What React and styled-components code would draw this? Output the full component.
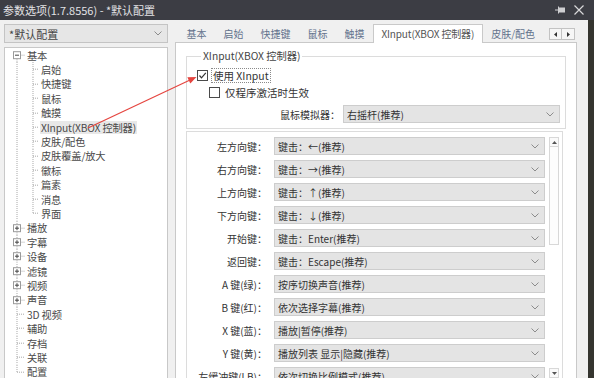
import React from "react";
import styled, { createGlobalStyle } from "styled-components";

const Global = createGlobalStyle`
  html, body { margin: 0; padding: 0; background: #f0f0f0; }
  body { font-family: "Noto Sans CJK SC", "Noto Sans", sans-serif; }
  * { box-sizing: border-box; }
`;

const Window = styled.div`
  position: relative;
  width: 594px;
  height: 378px;
  overflow: hidden;
  display: flex;
  flex-direction: column;
  background: #f0f0f0;
  font-family: "Noto Sans CJK SC", "Noto Sans", sans-serif;
`;

const TitleBar = styled.div`
  height: 20px;
  flex: none;
  background: #3c3d44;
  display: flex;
  align-items: center;
  padding-left: 3px;
  color: #e2e2e4;
  font-size: 11px;
`;

const Title = styled.div`
  flex: 1;
  white-space: nowrap;
  line-height: 20px;
`;

const TitleButtons = styled.div`
  display: flex;
  align-items: center;
  gap: 9px;
  margin-right: 10px;
`;

const Body = styled.div`
  flex: 1;
  min-height: 0;
  display: flex;
`;

const LeftColumn = styled.div`
  width: 164px;
  margin-left: 4px;
  padding-top: 4px;
  display: flex;
  flex-direction: column;
  gap: 4px;
  flex: none;
`;

const ProfileCombo = styled.div`
  height: 19px;
  flex: none;
  background: #e6e6e6;
  border: 1px solid #c4c4c4;
  display: flex;
  align-items: center;
  padding: 0 5px 0 4px;
  font-size: 11px;
  color: #444;
`;

const ComboText = styled.span`
  flex: 1;
  white-space: nowrap;
  overflow: hidden;
`;

const Tree = styled.div`
  flex: 1;
  min-height: 0;
  background: #fff;
  border: 1px solid #c8c8c8;
  border-bottom: none;
  overflow: hidden;
`;

const TreeRow = styled.div`
  height: 14.4px;
  display: flex;
  align-items: center;
  font-size: 10.25px;
  color: #4a4a4a;
  white-space: nowrap;
`;

const TreeLabel = styled.span`
  padding: 0 1px;
  line-height: 13px;
  letter-spacing: -0.15px;
  background: ${(p) => (p.$selected ? "#e8e8e8" : "transparent")};
`;

const RightColumn = styled.div`
  width: 402px;
  margin-left: 7px;
  flex: none;
  display: flex;
  flex-direction: column;
`;

const Gutter = styled.div`
  width: 11px;
  flex: none;
  background: #f0f0f0;
`;

const EdgeStrip = styled.div`
  flex: 1;
  background: #35352f;
`;

const TabStrip = styled.div`
  height: 22px;
  flex: none;
  display: flex;
  align-items: flex-start;
  padding: 4px 0 0 3px;
`;

const Tab = styled.div`
  flex: none;
  height: ${(p) => (p.$active ? "19px" : "18px")};
  line-height: 17px;
  padding: 0 7.5px;
  font-size: 10px;
  letter-spacing: ${(p) => (p.$active ? "-0.15px" : "0")};
  white-space: nowrap;
  color: ${(p) => (p.$active ? "#555" : "#62728c")};
  background: ${(p) => (p.$active ? "#fff" : "transparent")};
  border: ${(p) => (p.$active ? "1px solid #c9c9c9" : "1px solid transparent")};
  border-bottom: none;
  position: relative;
  z-index: 1;
`;

const TabScroll = styled.div`
  margin-left: auto;
  margin-top: 4px;
  margin-right: 2px;
  display: flex;
`;

const TabScrollBtn = styled.div`
  width: 13px;
  height: 12px;
  background: #f6f6f6;
  border: 1px solid #c3c3c3;
  border-left: ${(p) => (p.$second ? "none" : "1px solid #c3c3c3")};
  display: flex;
  align-items: center;
  justify-content: center;
`;

const Panel = styled.div`
  flex: 1;
  min-height: 0;
  background: #fff;
  border: 1px solid #c9c9c9;
  border-bottom: none;
  padding: 6px 10px 0 10px;
  display: flex;
  flex-direction: column;
`;

const Group = styled.fieldset`
  margin: 0;
  padding: 0 5px 5px 10px;
  border: 1px solid #dcdcdc;
  min-width: 0;
  flex: none;
`;

const Legend = styled.legend`
  padding: 0 2px;
  margin-left: 4px;
  font-size: 10.25px;
  line-height: 14px;
  color: #444;
`;

const CheckRow = styled.div`
  height: 17px;
  margin-top: ${(p) => (p.$first ? "4px" : "0")};
  padding-left: ${(p) => (p.$indent ? "12px" : "0")};
  display: flex;
  align-items: center;
  gap: 3px;
  font-size: 10.5px;
  color: #333;
`;

const CheckBox = styled.span`
  width: 11px;
  height: 11px;
  flex: none;
  border: 1px solid #4a4a4a;
  background: #fff;
  display: flex;
  align-items: center;
  justify-content: center;
`;

const CheckLabel = styled.span`
  line-height: 13px;
  padding: 0 1px;
  border: 1px dotted ${(p) => (p.$focus ? "#8a8a8a" : "transparent")};
  white-space: nowrap;
`;

const EmulatorRow = styled.div`
  margin-top: 4px;
  display: flex;
  justify-content: flex-end;
  align-items: center;
  gap: 3px;
`;

const FieldLabel = styled.span`
  font-size: 10px;
  color: #333;
  white-space: nowrap;
  text-align: right;
  width: ${(p) => (p.$width ? p.$width + "px" : "auto")};
  flex: none;
`;

const Select = styled.div`
  height: 18px;
  width: ${(p) => (p.$width ? p.$width + "px" : "auto")};
  flex: ${(p) => (p.$width ? "none" : "1")};
  min-width: 0;
  background: #e4e4e4;
  border: 1px solid #cdcdcd;
  display: flex;
  align-items: center;
  padding: 0 5px 0 3px;
  font-size: 10px;
  color: #333;
`;

const RowsPanel = styled.div`
  flex: 1;
  min-height: 0;
  margin: 2px 3px 0 0;
  border: 1px solid #dcdcdc;
  border-bottom: none;
  display: flex;
  overflow: hidden;
`;

const RowsList = styled.div`
  flex: 1;
  min-width: 0;
  padding-top: 5px;
  display: flex;
  flex-direction: column;
  gap: 5px;
`;

const KeyRow = styled.div`
  height: 18px;
  flex: none;
  display: flex;
  align-items: center;
  gap: 7px;
`;

const ScrollBar = styled.div`
  width: 10px;
  flex: none;
  margin: 5px 3px 0 4px;
  display: flex;
  flex-direction: column;
`;

const ScrollBtn = styled.div`
  height: 10px;
  flex: none;
  border: 1px solid #d8d8d8;
  background: #fafafa;
  display: flex;
  align-items: center;
  justify-content: center;
`;

const ScrollThumb = styled.div`
  height: 98px;
  flex: none;
  border: 1px solid #d8d8d8;
  border-top: none;
  background: #fdfdfd;
`;

const ScrollTrack = styled.div`
  flex: 1;
  background: #fff;
`;

const Overlay = styled.svg`
  position: absolute;
  left: 0;
  top: 0;
  pointer-events: none;
`;

const Chevron = () => (
  <svg width="8" height="5" viewBox="0 0 8 5">
    <polyline points="0.5,0.5 4,4 7.5,0.5" fill="none" stroke="#8c8c8c" strokeWidth="1" />
  </svg>
);

const H = 14.4;
const M = 7.2;
const dot = { stroke: "#a8a8a8", strokeWidth: 1, strokeDasharray: "1 1", fill: "none" };

function ExpandBox({ open }) {
  return (
    <g>
      <rect x="8.5" y={M - 3.5} width="7" height="7" fill="#fff" stroke="#9a9a9a" />
      <line x1="10" y1={M} x2="14" y2={M} stroke="#444" />
      {!open && <line x1="12" y1={M - 2} x2="12" y2={M + 2} stroke="#444" />}
    </g>
  );
}

function Connector({ item, idx }) {
  if (item.level === 1) {
    return (
      <svg width="35" height={H} viewBox={`0 0 35 ${H}`} style={{ flex: "none" }}>
        <line x1="12" y1="0" x2="12" y2={H} {...dot} />
        <line x1="28" y1="0" x2="28" y2={item.last ? M : H} {...dot} />
        <line x1="28" y1={M} x2="33" y2={M} {...dot} />
      </svg>
    );
  }
  const isFirst = idx === 0;
  const isLast = item.lastTop;
  if (item.box) {
    return (
      <svg width="21" height={H} viewBox={`0 0 21 ${H}`} style={{ flex: "none" }}>
        {!isFirst && <line x1="12" y1="0" x2="12" y2={M - 3.5} {...dot} />}
        <line x1="12" y1={M + 3.5} x2="12" y2={H} {...dot} />
        <line x1="15.5" y1={M} x2="20" y2={M} {...dot} />
        <ExpandBox open={item.open} />
      </svg>
    );
  }
  return (
    <svg width="21" height={H} viewBox={`0 0 21 ${H}`} style={{ flex: "none" }}>
      <line x1="12" y1="0" x2="12" y2={isLast ? M : H} {...dot} />
      <line x1="12" y1={M} x2="19" y2={M} {...dot} />
    </svg>
  );
}

const children = [
  "启始",
  "快捷键",
  "鼠标",
  "触摸",
  "XInput(XBOX 控制器)",
  "皮肤/配色",
  "皮肤覆盖/放大",
  "徽标",
  "篇素",
  "消息",
  "界面",
];

const treeItems = [
  { label: "基本", level: 0, box: true, open: true },
  ...children.map((c, i) => ({
    label: c,
    level: 1,
    last: i === children.length - 1,
    selected: c.startsWith("XInput"),
  })),
  ...["播放", "字幕", "设备", "滤镜", "视频", "声音"].map((l) => ({ label: l, level: 0, box: true })),
  ...["3D 视频", "辅助", "存档", "关联", "配置"].map((l, i, a) => ({
    label: l,
    level: 0,
    lastTop: i === a.length - 1,
  })),
];

const tabs = ["基本", "启始", "快捷键", "鼠标", "触摸", "XInput(XBOX 控制器)", "皮肤/配色"];

const keyRows = [
  ["左方向键：", "键击：←(推荐)"],
  ["右方向键：", "键击：→(推荐)"],
  ["上方向键：", "键击：↑(推荐)"],
  ["下方向键：", "键击：↓(推荐)"],
  ["开始键：", "键击：Enter(推荐)"],
  ["返回键：", "键击：Escape(推荐)"],
  ["A 键(绿)：", "按序切换声音(推荐)"],
  ["B 键(红)：", "依次选择字幕(推荐)"],
  ["X 键(蓝)：", "播放|暂停(推荐)"],
  ["Y 键(黄)：", "播放列表 显示|隐藏(推荐)"],
  ["左缓冲键(LB)：", "依次切换比例模式(推荐)"],
];

export default function App() {
  return (
    <>
      <Global />
      <Window>
        <TitleBar>
          <Title>参数选项(1.7.8556) - *默认配置</Title>
          <TitleButtons>
            <svg width="10" height="8" viewBox="0 0 10 8">
              <line x1="0" y1="4" x2="3" y2="4" stroke="#cfcfd2" strokeWidth="1" />
              <line x1="3.5" y1="0.5" x2="3.5" y2="7.5" stroke="#cfcfd2" strokeWidth="1" />
              <rect x="4" y="1.5" width="6" height="5" fill="#cfcfd2" />
            </svg>
            <svg width="10" height="10" viewBox="0 0 10 10">
              <path d="M0.5 0.5 L9.5 9.5 M9.5 0.5 L0.5 9.5" stroke="#d8d8da" strokeWidth="1.2" />
            </svg>
          </TitleButtons>
        </TitleBar>
        <Body>
          <LeftColumn>
            <ProfileCombo>
              <ComboText>*默认配置</ComboText>
              <Chevron />
            </ProfileCombo>
            <Tree>
              {treeItems.map((it, i) => (
                <TreeRow key={i}>
                  <Connector item={it} idx={i} />
                  <TreeLabel $selected={it.selected}>{it.label}</TreeLabel>
                </TreeRow>
              ))}
            </Tree>
          </LeftColumn>
          <RightColumn>
            <TabStrip>
              {tabs.map((t) => (
                <Tab key={t} $active={t.startsWith("XInput")}>
                  {t}
                </Tab>
              ))}
              <TabScroll>
                <TabScrollBtn>
                  <svg width="4" height="5" viewBox="0 0 4 5">
                    <polygon points="3,0 0,2.5 3,5" fill="#333" />
                  </svg>
                </TabScrollBtn>
                <TabScrollBtn $second>
                  <svg width="4" height="5" viewBox="0 0 4 5">
                    <polygon points="1,0 4,2.5 1,5" fill="#333" />
                  </svg>
                </TabScrollBtn>
              </TabScroll>
            </TabStrip>
            <Panel>
              <Group>
                <Legend>XInput(XBOX 控制器)</Legend>
                <CheckRow $first>
                  <CheckBox>
                    <svg width="9" height="9" viewBox="0 0 9 9">
                      <polyline points="1.5,4.5 3.5,6.8 7.8,1.8" fill="none" stroke="#333" strokeWidth="1.2" />
                    </svg>
                  </CheckBox>
                  <CheckLabel $focus>使用 XInput</CheckLabel>
                </CheckRow>
                <CheckRow $indent>
                  <CheckBox />
                  <CheckLabel>仅程序激活时生效</CheckLabel>
                </CheckRow>
                <EmulatorRow>
                  <FieldLabel>鼠标模拟器：</FieldLabel>
                  <Select $width={217}>
                    <ComboText>右摇杆(推荐)</ComboText>
                    <Chevron />
                  </Select>
                </EmulatorRow>
              </Group>
              <RowsPanel>
                <RowsList>
                  {keyRows.map(([k, v]) => (
                    <KeyRow key={k}>
                      <FieldLabel $width={80}>{k}</FieldLabel>
                      <Select>
                        <ComboText>{v}</ComboText>
                        <Chevron />
                      </Select>
                    </KeyRow>
                  ))}
                </RowsList>
                <ScrollBar>
                  <ScrollBtn>
                    <svg width="5" height="3" viewBox="0 0 5 3">
                      <polygon points="0,3 2.5,0 5,3" fill="#555" />
                    </svg>
                  </ScrollBtn>
                  <ScrollThumb />
                  <ScrollTrack />
                  <ScrollBtn>
                    <svg width="5" height="3" viewBox="0 0 5 3">
                      <polygon points="0,0 2.5,3 5,0" fill="#555" />
                    </svg>
                  </ScrollBtn>
                </ScrollBar>
              </RowsPanel>
            </Panel>
          </RightColumn>
          <Gutter />
          <EdgeStrip />
        </Body>
        <Overlay width="594" height="378" viewBox="0 0 594 378">
          <line x1="88" y1="128" x2="190" y2="80" stroke="#e5453f" strokeWidth="1.3" />
          <polygon points="196.5,77 187.3,77.2 190.3,83.6" fill="#e5453f" />
        </Overlay>
      </Window>
    </>
  );
}
